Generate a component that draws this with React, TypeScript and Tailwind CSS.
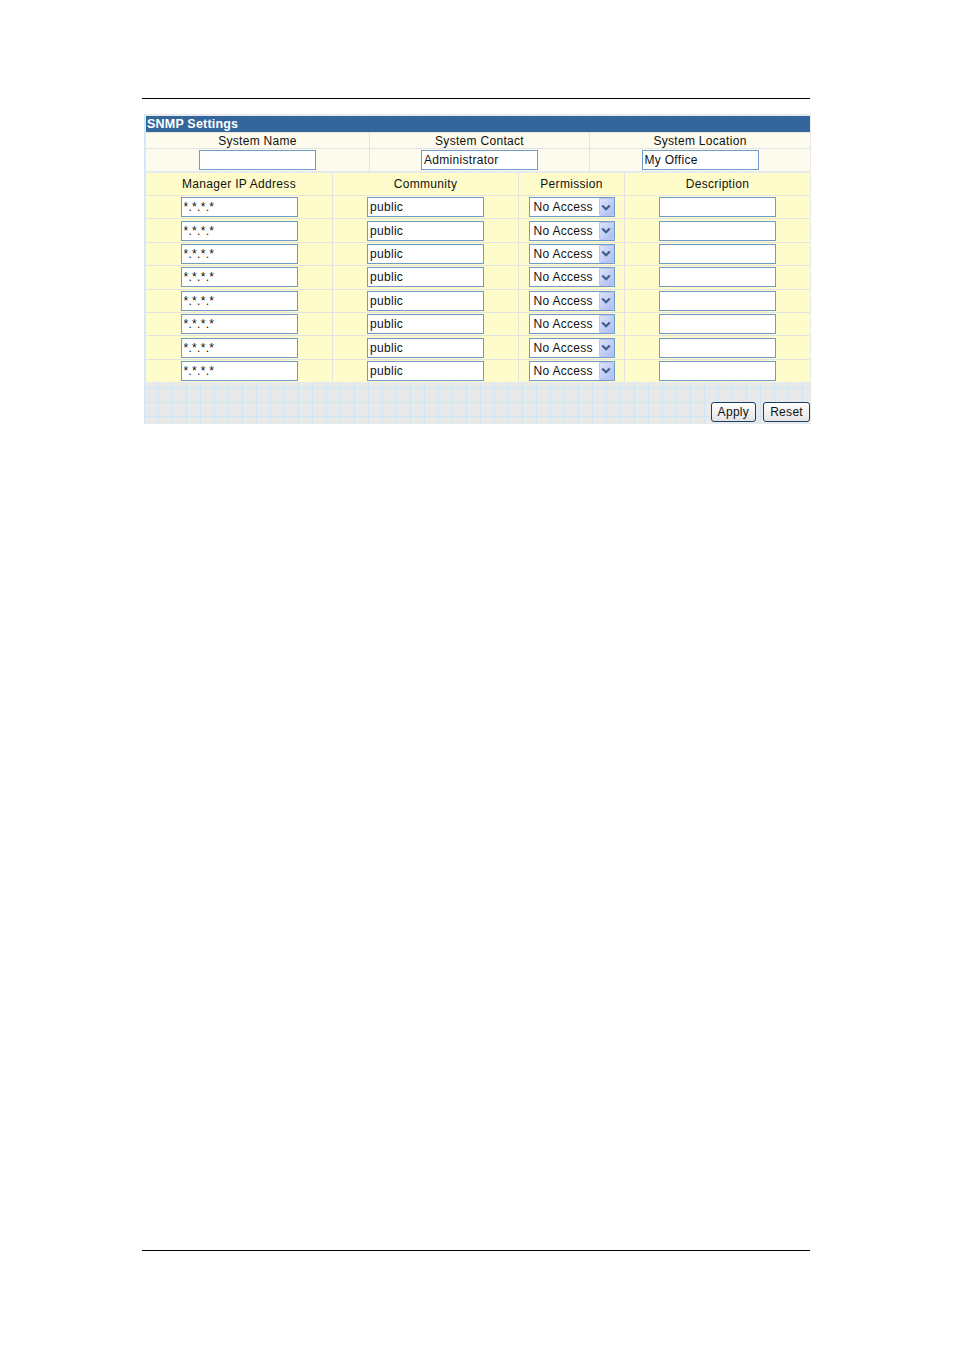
import React from 'react';

// ─── Small form pieces ──────────────────────────────────────────────────────

function TextBox({ value = '' }: { value?: string }) {
  return (
    <input
      type="text"
      defaultValue={value}
      className="h-[20px] w-[117px] border border-[#6f9bc9] bg-white px-[2px] text-[12px] tracking-[0.3px] text-[#111] outline-none"
    />
  );
}

function PermissionSelect() {
  return (
    <div className="relative h-[20px] w-[86px]">
      <select
        defaultValue="none"
        className="h-full w-full appearance-none border border-[#6f9bc9] bg-white pl-[4px] text-[12px] tracking-[0.3px] text-[#111] outline-none"
      >
        <option value="none">No Access</option>
        <option value="ro">Read Only</option>
        <option value="rw">Read/Write</option>
      </select>
      <span className="pointer-events-none absolute right-[1px] top-[1px] flex h-[18px] w-[15px] items-center justify-center rounded-[1px] border border-[#b9c5f0] bg-gradient-to-br from-[#dde3fb] to-[#adbdf0]">
        <svg width="10" height="7" viewBox="0 0 10 7" fill="none">
          <path d="M1.2 1.5 L5 5.2 L8.8 1.5" stroke="#3f5d8c" strokeWidth="2.2" />
        </svg>
      </span>
    </div>
  );
}

function Button({ children }: { children: React.ReactNode }) {
  return (
    <button className="h-[20px] rounded-[3px] border border-[#1d3f66] bg-gradient-to-b from-white to-[#e4e4e4] px-[6px] text-[12px] leading-none text-[#111]">
      {children}
    </button>
  );
}

// ─── Page ────────────────────────────────────────────────────────────────────

const MANAGERS = Array.from({ length: 8 }, () => ({ ip: '*.*.*.*', community: 'public' }));

export default function App() {
  return (
    <div className="min-h-[1350px] w-[954px] bg-white pt-[98px] font-['Liberation_Sans',Arial,sans-serif] text-[12px] tracking-[0.3px] text-[#111]">
      <div className="ml-[142px] h-px w-[668px] bg-black" />

      {/* SNMP settings panel */}
      <div className="ml-[144px] mt-[15px] w-[667px] bg-[#e9e9e9] bg-[linear-gradient(to_right,#cfe6f6_1px,transparent_1px),linear-gradient(to_bottom,#cfe6f6_1px,transparent_1px)] bg-size-[14px_14px] bg-position-[0px_8px] py-[2px] pl-[2px]">
        <div className="w-[664px]">
          {/* system info */}
          <div className="grid grid-cols-[223px_219px_220px] gap-px bg-[#e3e3e3]">
            <div className="col-span-3 flex h-[16px] items-center bg-[#33669a] pl-[1px] text-[12.5px] font-bold tracking-[0.2px] text-white">
              SNMP Settings
            </div>
            {['System Name', 'System Contact', 'System Location'].map(label => (
              <div key={label} className="flex h-[15px] items-center justify-center bg-[#fdfbee]">
                {label}
              </div>
            ))}
            {['', 'Administrator', 'My Office'].map((v, i) => (
              <div key={i} className="flex h-[22px] items-center justify-center bg-[#fdfbee]">
                <TextBox value={v} />
              </div>
            ))}
          </div>

          {/* managers */}
          <div className="mt-[2px] grid grid-cols-[186px_185px_105px_185px] gap-px bg-[#e3e3e3]">
            {['Manager IP Address', 'Community', 'Permission', 'Description'].map(h => (
              <div key={h} className="flex h-[22px] items-center justify-center bg-[#fefccb]">
                {h}
              </div>
            ))}
            {MANAGERS.map((m, i) => (
              <React.Fragment key={i}>
                <div className="flex h-[22.4px] items-center justify-center bg-[#fefccb]">
                  <TextBox value={m.ip} />
                </div>
                <div className="flex h-[22.4px] items-center justify-center bg-[#fefccb]">
                  <TextBox value={m.community} />
                </div>
                <div className="flex h-[22.4px] items-center justify-center bg-[#fefccb]">
                  <PermissionSelect />
                </div>
                <div className="flex h-[22.4px] items-center justify-center bg-[#fefccb]">
                  <TextBox />
                </div>
              </React.Fragment>
            ))}
          </div>

          <div className="flex justify-end gap-[7px] pt-[20px]">
            <Button>Apply</Button>
            <Button>Reset</Button>
          </div>
        </div>
      </div>

      <div className="ml-[142px] mt-[826px] h-px w-[668px] bg-black" />
    </div>
  );
}
